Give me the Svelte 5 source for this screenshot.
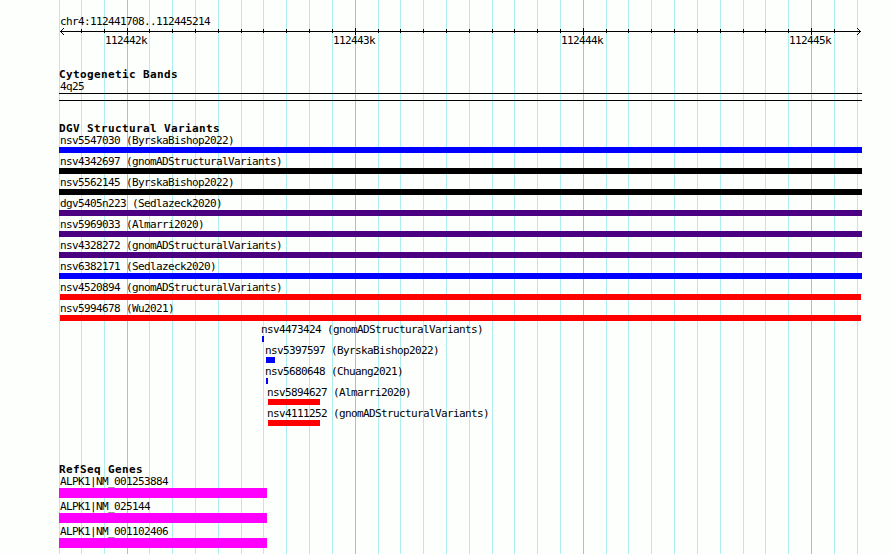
<script>
    const start = 112441708;
    const scale = 0.22812;
    const kilobase = 112442000;

    const toX = (pos) => Math.max(59, Math.round(60 + (pos - start) * scale));

    const ticks = Array.from({ length: 36 }, (_, i) => {
        const pos = kilobase + (i - 3) * 100;
        return { x: toX(pos), major: pos % 1000 === 0, label: `${pos / 1000}k` };
    });

    const variants = [
        { name: 'nsv5547030 (ByrskaBishop2022)', x: 59, width: 803, color: '#0000ff' },
        { name: 'nsv4342697 (gnomADStructuralVariants)', x: 59, width: 803, color: '#000000' },
        { name: 'nsv5562145 (ByrskaBishop2022)', x: 59, width: 803, color: '#000000' },
        { name: 'dgv5405n223 (Sedlazeck2020)', x: 59, width: 803, color: '#4b0082' },
        { name: 'nsv5969033 (Almarri2020)', x: 59, width: 803, color: '#4b0082' },
        { name: 'nsv4328272 (gnomADStructuralVariants)', x: 59, width: 803, color: '#4b0082' },
        { name: 'nsv6382171 (Sedlazeck2020)', x: 59, width: 803, color: '#0000ff' },
        { name: 'nsv4520894 (gnomADStructuralVariants)', x: 60, width: 801, color: '#ff0000' },
        { name: 'nsv5994678 (Wu2021)', x: 60, width: 801, color: '#ff0000' },
        { name: 'nsv4473424 (gnomADStructuralVariants)', x: 262, width: 2, color: '#0000ff', label: 261 },
        { name: 'nsv5397597 (ByrskaBishop2022)', x: 266, width: 9, color: '#0000ff', label: 265 },
        { name: 'nsv5680648 (Chuang2021)', x: 266, width: 2, color: '#0000ff', label: 265 },
        { name: 'nsv5894627 (Almarri2020)', x: 268, width: 52, color: '#ff0000', label: 267 },
        { name: 'nsv4111252 (gnomADStructuralVariants)', x: 268, width: 52, color: '#ff0000', label: 267 }
    ];

    const genes = ['ALPK1|NM_001253884', 'ALPK1|NM_025144', 'ALPK1|NM_001102406'];
</script>

<div class="browser">
    <svg class="grid" width="890" height="554" shape-rendering="crispEdges">
        {#each ticks as tick}
            <rect class={tick.major ? 'major' : 'minor'} x={tick.x} y="0" width="1" height="554" />
        {/each}
    </svg>

    <header class="ruler">
        <div class="region">chr4:112441708..112445214</div>
        <svg class="axis" width="890" height="7" shape-rendering="crispEdges">
            <rect x="60" y="3" width="801" height="1" />
            {#each ticks.slice(1, -1) as tick}
                <rect x={tick.x} y={tick.major ? 0 : 1} width="1" height={tick.major ? 7 : 4} />
            {/each}
            <path d="M61 2h1v1h-1zM62 1h1v1h-1zM63 0h1v1h-1zM61 4h1v1h-1zM62 5h1v1h-1zM63 6h1v1h-1z" />
            <path d="M859 2h1v1h-1zM858 1h1v1h-1zM857 0h1v1h-1zM859 4h1v1h-1zM858 5h1v1h-1zM857 6h1v1h-1z" />
        </svg>
        <div class="scale">
            {#each ticks.filter((t) => t.major) as tick}
                <span style="left: {tick.x - 22}px">{tick.label}</span>
            {/each}
        </div>
    </header>

    <section class="bands">
        <h2>Cytogenetic Bands</h2>
        <div class="label">4q25</div>
        <div class="band"></div>
    </section>

    <section class="variants">
        <h2>DGV Structural Variants</h2>
        {#each variants as v}
            <div class="variant">
                <div class="label" style="margin-left: {v.label ?? 60}px">{v.name}</div>
                <div class="bar" style="margin-left: {v.x}px; width: {v.width}px; background: {v.color}"></div>
            </div>
        {/each}
    </section>

    <section class="genes">
        <h2>RefSeq Genes</h2>
        {#each genes as gene}
            <div class="gene">
                <div class="label">{gene}</div>
                <div class="exon"></div>
            </div>
        {/each}
    </section>
</div>

<style>
    :global(body) {
        margin: 0;
        background: #fdfffc;
    }

    .browser {
        position: relative;
        width: 890px;
        height: 554px;
        overflow: hidden;
        color: #000;
        font-family: "DejaVu Sans Mono", monospace;
        font-size: 11px;
        line-height: 14px;
        letter-spacing: -0.622px;
    }

    .grid {
        position: absolute;
        inset: 0;
        z-index: -1;
    }

    .minor {
        fill: #afeeee;
    }

    .major {
        fill: #87ceeb;
    }

    .ruler {
        height: 68px;
        padding-top: 15px;
        box-sizing: border-box;
    }

    .region {
        height: 13px;
        margin-left: 60px;
    }

    .axis {
        display: block;
    }

    .scale {
        position: relative;
        height: 12px;
    }

    .scale span {
        position: absolute;
        top: -1px;
    }

    h2 {
        height: 12px;
        margin: 0 0 0 59px;
        font-size: 11px;
        line-height: 14px;
        letter-spacing: 0.378px;
    }

    .label {
        height: 12px;
        margin-left: 60px;
    }

    .band {
        width: 803px;
        height: 6px;
        margin: 1px 0 0 59px;
        border-top: 1px solid #000;
        border-bottom: 1px solid #000;
    }

    .variants {
        margin-top: 21px;
    }

    .variant {
        height: 21px;
    }

    .bar {
        height: 6px;
        margin-top: 1px;
    }

    .genes {
        margin-top: 35px;
    }

    .gene {
        height: 25px;
    }

    .exon {
        width: 208px;
        height: 10px;
        margin: 1px 0 0 59px;
        background: #ff00ff;
    }
</style>
